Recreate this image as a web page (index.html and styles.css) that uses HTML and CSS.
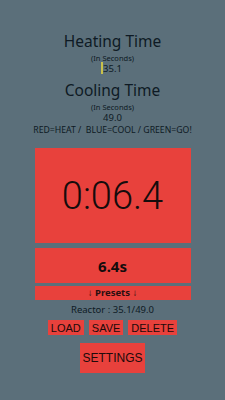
FILE: index.html
```html
<!DOCTYPE html>
<html lang="en">
<head>
<meta charset="UTF-8">
<meta name="viewport" content="width=device-width, initial-scale=1.0">
<title>Reactor Timer</title>
<link rel="stylesheet" href="styles.css">
</head>
<body>

<div class="app">
    <h2 class="title heat-title">Heating Time</h2>
    <div class="hint">(In Seconds)</div>
    <div class="value"><span class="caret"></span>35.1</div>

    <h2 class="title">Cooling Time</h2>
    <div class="hint">(In Seconds)</div>
    <div class="value">49.0</div>

    <div class="legend">RED=HEAT / &nbsp;BLUE=COOL / GREEN=GO!</div>

    <div class="clock">0:06.4</div>
    <div class="elapsed">6.4s</div>
    <div class="presets">&#8595; Presets &#8595;</div>

    <div class="reactor">Reactor : 35.1/49.0</div>

    <div class="actions">
        <button class="btn">LOAD</button>
        <button class="btn">SAVE</button>
        <button class="btn">DELETE</button>
    </div>

    <button class="btn settings-btn">SETTINGS</button>
</div>

</body>
</html>
```

FILE: styles.css
```css
body {
    margin: 0;
    padding: 0;
    background-color: #5b6f7a;
    font-family: "Noto Sans", sans-serif;
    color: #0e1a24;
}

.app {
    display: flex;
    flex-direction: column;
    align-items: center;
    height: 400px;
}

.title {
    margin: 0;
    font-size: 15.5px;
    line-height: 18px;
    font-weight: normal;
}

.heat-title {
    margin-top: 32px;
}

.hint {
    margin-top: 3px;
    font-size: 7.5px;
    line-height: 10px;
}

.value {
    position: relative;
    font-size: 9.5px;
    line-height: 11px;
    margin-bottom: 7px;
}

.caret {
    position: absolute;
    left: -2px;
    top: -1px;
    width: 2px;
    height: 12px;
    background-color: #c9c24a;
}

.legend {
    margin-top: -5px;
    font-size: 8.7px;
    line-height: 10px;
}

.clock {
    width: 156px;
    height: 95px;
    margin-top: 13px;
    background-color: #e8413c;
    display: flex;
    justify-content: center;
    align-items: center;
    font-family: Roboto, sans-serif;
    font-size: 38px;
    font-weight: 300;
    color: #140c0c;
}

.elapsed {
    width: 156px;
    height: 35px;
    margin-top: 5px;
    background-color: #e8413c;
    display: flex;
    justify-content: center;
    align-items: center;
    font-size: 15px;
    font-weight: bold;
    color: #140c0c;
}

.presets {
    width: 156px;
    height: 14px;
    margin-top: 3px;
    background-color: #e8413c;
    text-align: center;
    font-size: 9.5px;
    line-height: 14px;
    font-weight: bold;
    color: #2a0f10;
}

.reactor {
    margin-top: 4px;
    font-size: 9.5px;
    line-height: 12px;
}

.actions {
    display: flex;
    gap: 5px;
    margin-top: 4px;
}

.btn {
    border: none;
    margin: 0;
    padding: 0 3px;
    height: 15px;
    background-color: #e8413c;
    color: #200a0a;
    font-family: "Liberation Sans", Arial, sans-serif;
    font-size: 11px;
    cursor: pointer;
}

.settings-btn {
    margin-top: 8px;
    height: 30px;
    padding: 0 2px;
    font-size: 12px;
}
```
